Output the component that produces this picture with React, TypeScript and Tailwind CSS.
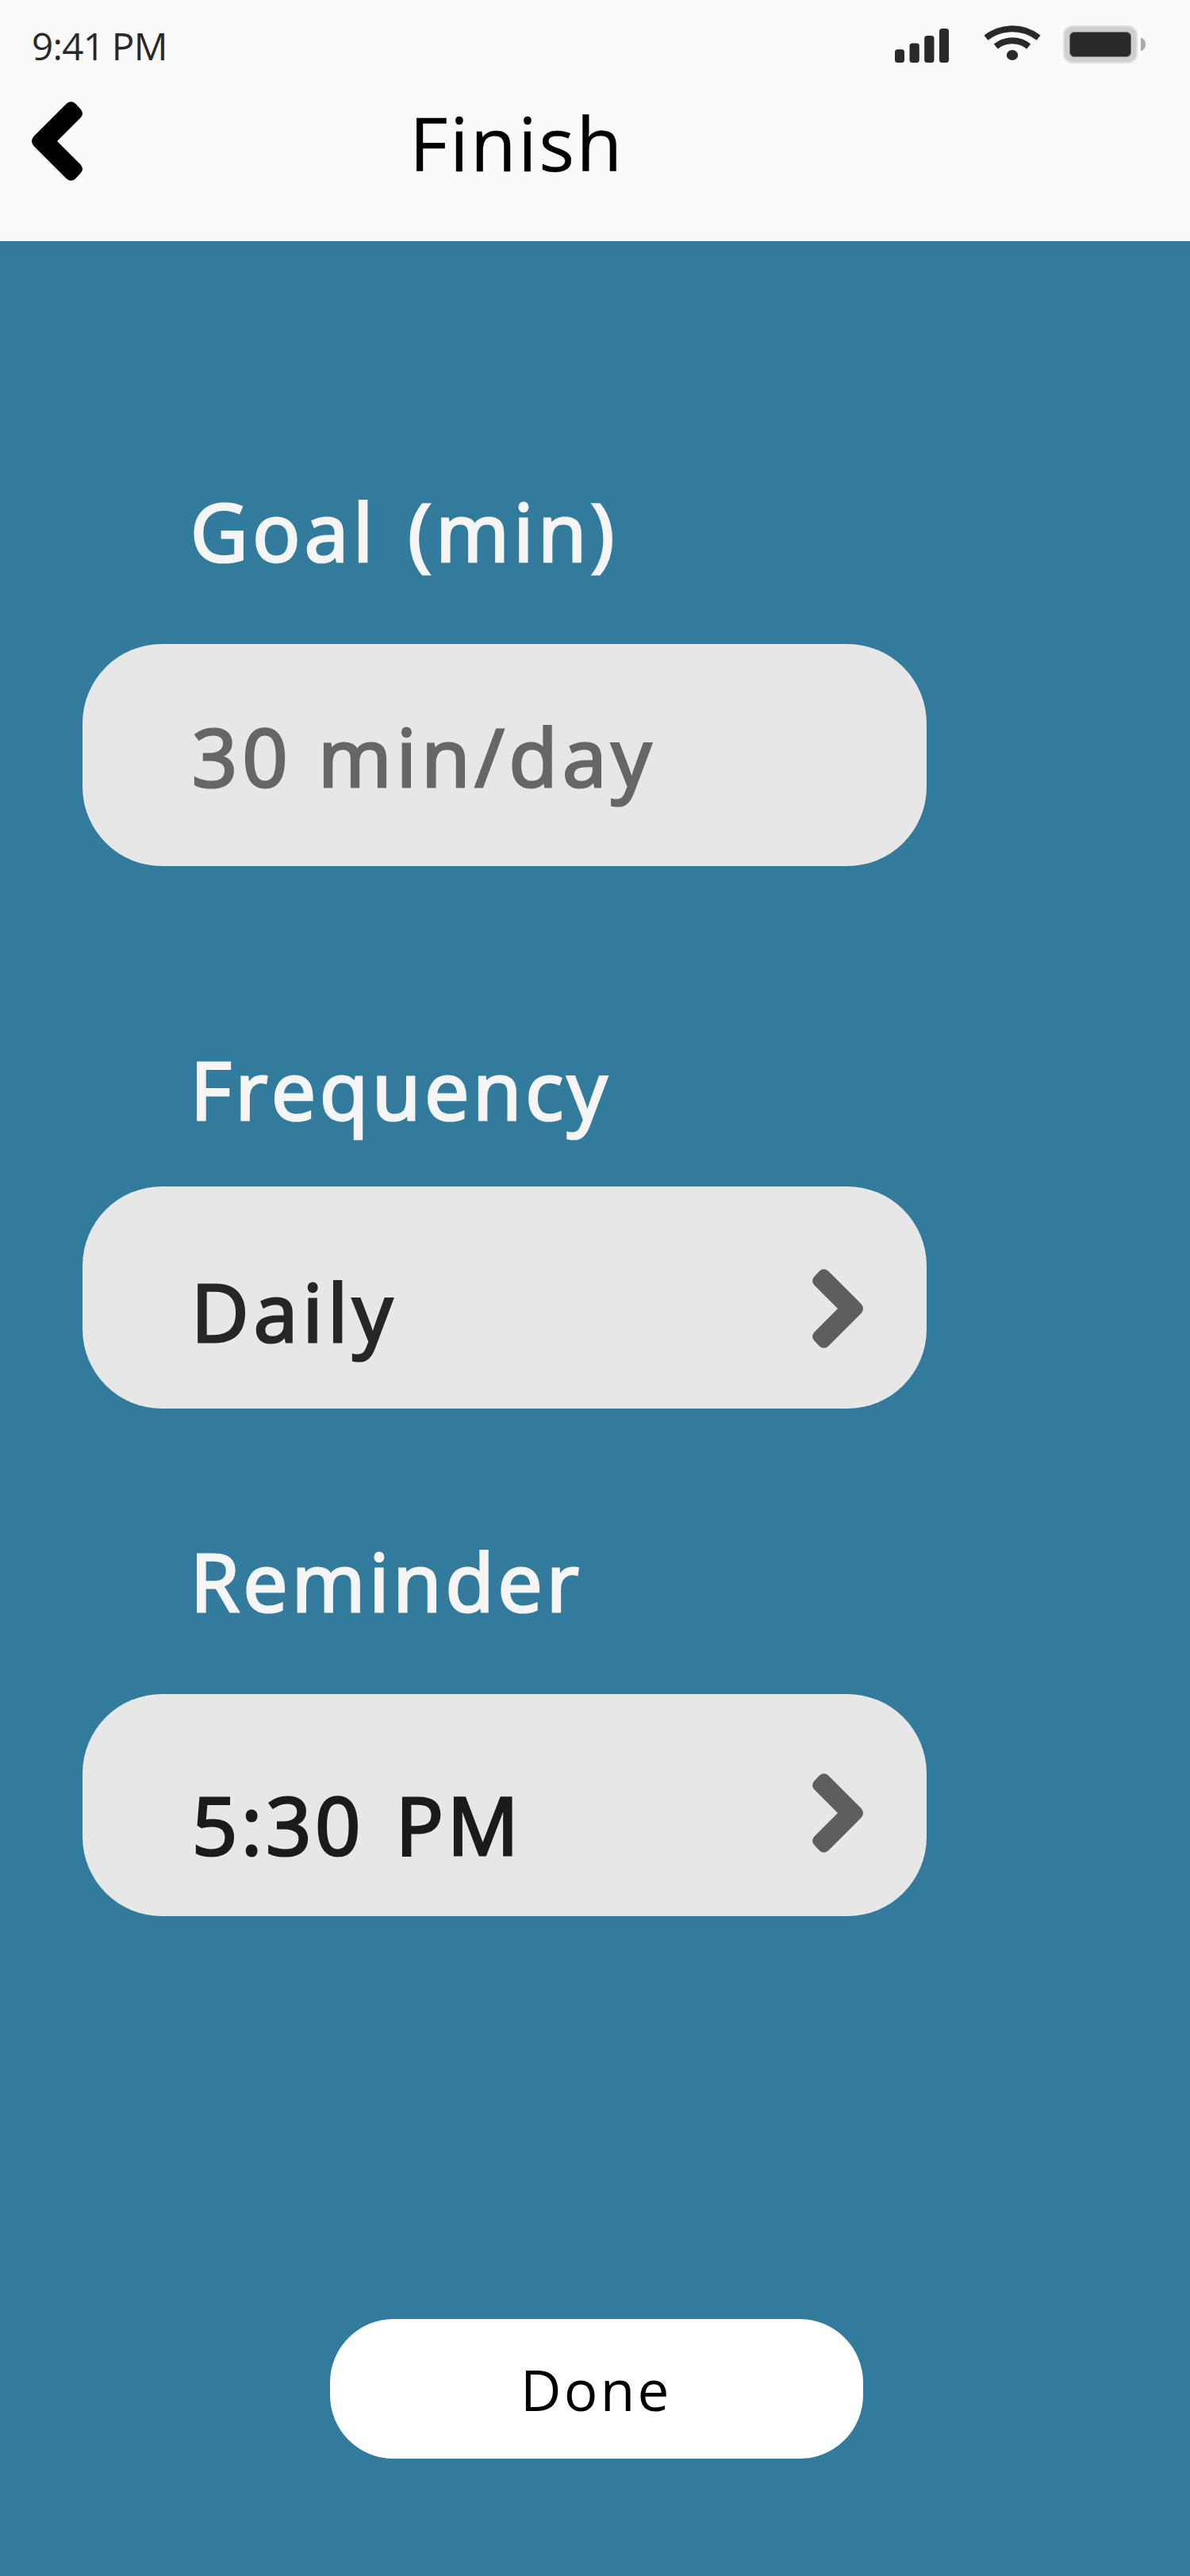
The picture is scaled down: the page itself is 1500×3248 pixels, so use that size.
import React from "react";

function Chevron({ className }: { className: string }) {
  return (
    <svg viewBox="0 0 64 100" className={`h-[100px] w-16 shrink-0 ${className}`} fill="currentColor" aria-hidden="true">
      <path d="M2.5 44 L44 2.5 Q49.5 -2.2 55 2.5 L61.5 9.5 Q66.5 15 61.5 20.5 L32 50 L61.5 79.5 Q66.5 85 61.5 90.5 L55 97.5 Q49.5 102.2 44 97.5 L2.5 56 Q-2.5 50 2.5 44 Z" />
    </svg>
  );
}

function StatusIcons() {
  return (
    <div className="flex pt-8 text-[#292929]">
      <svg viewBox="0 0 68 48" className="h-12 w-[68px]" fill="currentColor" aria-label="Signal">
        <rect x="0" y="30.3" width="12" height="16.7" rx="3.5" />
        <rect x="18.5" y="22.5" width="12.3" height="24.5" rx="3.5" />
        <rect x="37.2" y="13" width="12.3" height="34" rx="3.5" />
        <rect x="56" y="4" width="12" height="43" rx="3.5" />
      </svg>
      <svg viewBox="0 0 72 48" className="ml-11 h-12 w-[72px]" fill="none" stroke="currentColor" strokeWidth="8" aria-label="Wi-Fi">
        <path d="M2.9 15.7 A54 54 0 0 1 69.1 15.7" />
        <path d="M15.3 26.6 A33 33 0 0 1 56.7 26.6" />
        <ellipse cx="36" cy="37.5" rx="7.2" ry="6.5" fill="currentColor" stroke="none" />
      </svg>
      <div className="ml-7 flex h-12 w-[94px] items-center justify-center rounded-[12px] border-2 border-[#e0e0e0] bg-[#cfcfcf]">
        <div className="h-8 w-[78px] rounded-[6px] border border-[#777777] bg-[#292929]" />
      </div>
      <svg viewBox="0 0 6 48" className="ml-1 h-12 w-1.5" fill="#a8a8a8" aria-hidden="true">
        <path d="M0 15.5 Q6 17.5 6 24 Q6 30 0 32.5 Z" />
      </svg>
    </div>
  );
}

const heading =
  "ml-[240px] whitespace-nowrap text-[100px] leading-[136px] text-[#f5f5f5] [-webkit-text-stroke:3.2px_currentColor]";
const field =
  "ml-[104px] flex h-[280px] w-[1064px] items-start justify-between rounded-[100px] bg-[#e7e7e7] pr-20";
const value =
  "whitespace-nowrap text-[100px] leading-[136px] [-webkit-text-stroke:3.2px_currentColor]";

export default function App() {
  return (
    <div className="flex h-[3248px] w-[1500px] flex-col bg-[#327b9c] font-['Open_Sans','Noto_Sans',sans-serif]">
      <header className="h-[304px] bg-[#fafafa]">
        <div className="flex h-[116px] items-start justify-between pl-10 pr-14">
          <span className="pt-[25px] text-[47.5px] leading-[65px] tracking-[-0.71px] text-[#292929] [word-spacing:-1.95px]">9:41 PM</span>
          <StatusIcons />
        </div>
        <div className="flex items-start pl-10">
          <button className="mt-3" aria-label="Back">
            <Chevron className="block text-black" />
          </button>
          <h1 className="ml-[412px] text-[94px] leading-[128px] tracking-[2.4px] text-black [-webkit-text-stroke:0.4px_currentColor]">Finish</h1>
        </div>
      </header>

      <main className="flex flex-col">
        <h2 className={`${heading} mt-[297px] tracking-[5.5px] [word-spacing:7px]`}>Goal (min)</h2>
        <div className={`${field} mt-[75px] pl-[138px] pt-[73px]`}>
          <span className={`${value} tracking-[6.2px] text-[#666666]`}>30 min/day</span>
        </div>

        <h2 className={`${heading} mt-[213px] tracking-[4.8px]`}>Frequency</h2>
        <div className={`${field} mt-[55px] pl-[137px] pt-[89px]`}>
          <span className={`${value} tracking-[6.2px] text-[#262626]`}>Daily</span>
          <Chevron className="mt-[15px] rotate-180 text-[#5e5e5e]" />
        </div>

        <h2 className={`${heading} mt-[149px] tracking-[4.9px]`}>Reminder</h2>
        <div className={`${field} mt-[75px] pl-[138px] pt-24`}>
          <span className={`${value} tracking-[4.9px] text-[#1b1b1b] [word-spacing:8.5px]`}>5:30 PM</span>
          <Chevron className="mt-1 rotate-180 text-[#5e5e5e]" />
        </div>

        <button className="ml-[416px] mt-[508px] flex h-44 w-[672px] items-start rounded-[80px] bg-white pl-[240px] pt-10 text-[71px] leading-[97px] tracking-[3.23px] text-black">
          Done
        </button>
      </main>
    </div>
  );
}
